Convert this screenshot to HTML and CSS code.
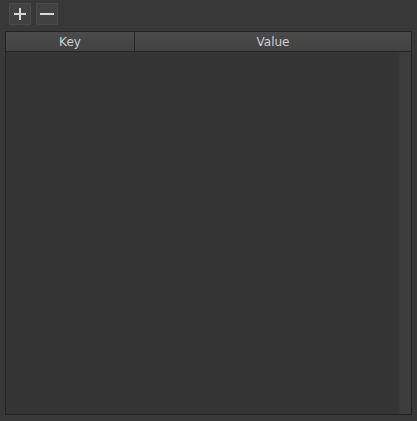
FILE: index.html
```html
<!DOCTYPE html>
<html>
<head>
<meta charset="utf-8">
<link rel="stylesheet" href="styles.css">
</head>
<body>
<div class="app">
  <div class="toolbar">
    <button class="tbtn" aria-label="add">
      <svg width="14" height="14" viewBox="0 0 14 14"><rect x="6" y="1" width="2" height="12" fill="#d8d8d8"/><rect x="1" y="6" width="12" height="2" fill="#d8d8d8"/></svg>
    </button>
    <button class="tbtn" aria-label="remove">
      <svg width="16" height="14" viewBox="0 0 16 14"><rect x="1" y="6" width="14" height="2" fill="#d8d8d8"/></svg>
    </button>
  </div>
  <div class="table">
    <div class="header">
      <div class="hcell key">Key</div>
      <div class="hcell value">Value</div>
    </div>
    <div class="body">
      <div class="rows"></div>
      <div class="scrollbar"></div>
    </div>
  </div>
</div>
</body>
</html>
```
FILE: styles.css
```css
html, body {
  margin: 0;
  padding: 0;
  background: #383838;
  width: 417px;
  height: 421px;
  overflow: hidden;
}
.app {
  display: flex;
  flex-direction: column;
  width: 417px;
  height: 421px;
  box-sizing: border-box;
  padding: 3px 5px 6px 5px;
  font-family: "DejaVu Sans", Verdana, sans-serif;
}
.toolbar {
  display: flex;
  gap: 5px;
  padding-left: 4px;
  height: 22px;
  margin-bottom: 6px;
}
.tbtn {
  width: 22px;
  height: 22px;
  margin: 0;
  padding: 0;
  border: 1px solid #4a4a4a;
  background: #414141;
  display: flex;
  align-items: center;
  justify-content: center;
  box-sizing: border-box;
}
.table {
  flex: 1;
  display: flex;
  flex-direction: column;
  border: 1px solid #232323;
  background: #353535;
  min-height: 0;
}
.header {
  display: flex;
  height: 19px;
  background: linear-gradient(#4b4b4b, #424242);
  border-bottom: 1px solid #262626;
}
.hcell {
  display: flex;
  align-items: center;
  justify-content: center;
  color: #d0d0d0;
  font-size: 12px;
}
.key {
  width: 128px;
  border-right: 1px solid #262626;
}
.value {
  flex: 1;
}
.body {
  flex: 1;
  display: flex;
}
.rows {
  flex: 1;
}
.scrollbar {
  width: 11px;
  background: #3c3c3c;
  border-left: 1px solid #383838;
}
```
